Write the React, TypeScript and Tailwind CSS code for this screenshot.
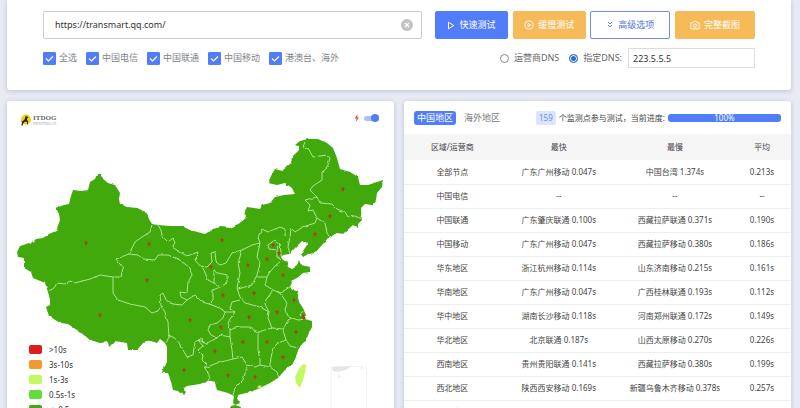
import { useState } from "react";

const carriers = ["全选", "中国电信", "中国联通", "中国移动", "港澳台、海外"];

const rows = [
  ["全部节点", "广东广州移动 0.047s", "中国台湾 1.374s", "0.213s"],
  ["中国电信", "--", "--", "--"],
  ["中国联通", "广东肇庆联通 0.100s", "西藏拉萨联通 0.371s", "0.190s"],
  ["中国移动", "广东广州移动 0.047s", "西藏拉萨移动 0.380s", "0.186s"],
  ["华东地区", "浙江杭州移动 0.114s", "山东济南移动 0.215s", "0.161s"],
  ["华南地区", "广东广州移动 0.047s", "广西桂林联通 0.193s", "0.112s"],
  ["华中地区", "湖南长沙移动 0.118s", "河南郑州联通 0.172s", "0.149s"],
  ["华北地区", "北京联通 0.187s", "山西太原移动 0.270s", "0.226s"],
  ["西南地区", "贵州贵阳联通 0.141s", "西藏拉萨移动 0.380s", "0.199s"],
  ["西北地区", "陕西西安移动 0.169s", "新疆乌鲁木齐移动 0.378s", "0.257s"],
  ["东北地区", "黑龙江哈尔滨联通 0.088s", "吉林长春联通 0.290s", "0.204s"],
];

const legend = [
  { color: "bg-[#dc1f1a]", text: ">10s" },
  { color: "bg-[#f09a30]", text: "3s-10s" },
  { color: "bg-[#c2f95f]", text: "1s-3s" },
  { color: "bg-[#62dd3a]", text: "0.5s-1s" },
  { color: "bg-[#42a90d]", text: "<=0.5s" },
];

const outline =
  "17,252 20,246 29,243 31,244 36,239 43,238 49,234 56,231 60,220 59,214 56,208 64,205 69,204 71,196 73,190 81,191 88,190 90,182 95,179 97,174 101,174 102,178 108,183 115,185 120,193 119,199 120,204 128,207 137,208 146,212 149,219 152,224 158,225 170,226 182,226 190,230 205,234 213,229 221,227 230,228 240,223 247,217 244,213 247,207 254,208 260,209 262,205 270,203 275,197 284,195 295,194 292,188 285,183 277,185 268,183 271,176 275,169 282,171 291,163 292,157 299,150 299,146 295,145 300,141 308,139 318,139 327,143 333,148 337,158 340,169 350,172 358,177 360,185 368,185 377,182 383,180 382,187 377,193 376,200 372,205 365,204 361,208 362,220 358,224 358,228 353,225 343,234 337,233 328,238 322,245 315,253 308,254 303,257 301,254 307,245 306,241 302,241 295,248 290,254 283,255 281,257 283,260 287,262 288,267 292,269 297,266 299,260 301,265 310,267 310,272 303,273 297,278 293,280 290,287 297,292 299,302 303,308 306,315 305,319 312,321 312,327 308,335 306,341 303,343 298,350 297,355 292,365 285,370 278,378 270,383 260,388 250,392 238,395 237,398 240,403 235,405 233,403 234,396 228,393 217,390 215,383 208,381 200,384 187,386 184,388 185,395 180,393 178,391 173,390 171,382 168,373 162,373 163,369 167,363 167,347 165,343 160,339 157,343 151,341 143,343 137,350 128,350 127,343 115,341 109,347 108,342 100,343 90,340 80,332 68,324 60,323 49,316 46,307 50,305 50,300 48,292 45,283 33,278 31,272 24,268 24,258 18,257";

const borders = [
  "49,291 54,288 57,283 65,284 70,281 75,283 90,279 100,275 113,277 121,277 123,268 116,259 129,254 135,242 142,237 150,232 152,225",
  "113,277 113,293 118,300 130,304 145,307 152,313 158,311 161,306 165,312 168,323 169,337 166,343",
  "161,306 160,295 163,293 167,302 173,304 182,305 187,300 181,297 180,292 187,293 188,282 192,275 190,268 180,260 168,255 158,255 155,260 143,259 138,255 129,254",
  "158,225 161,230 162,236 168,242 173,238 175,243 172,247 180,252 187,256 198,252 195,260 200,266 207,267 212,262 211,253 215,252 216,262 220,265 226,263 232,253 242,250 252,245 260,243",
  "200,266 203,268 208,280 214,283 214,270 218,273 227,275 227,283 220,287 214,283",
  "220,287 213,290 213,300 209,304 202,302 195,295 187,300",
  "209,304 218,307 225,312 235,312 230,309 232,302 240,300",
  "242,250 238,263 240,273 237,288 240,297 245,303 260,307 269,312 268,318 272,328 283,329",
  "260,243 257,257 260,263 257,275 252,285 238,289",
  "260,243 258,237 262,229 268,232 280,227 285,229 285,236 290,237 291,228 295,232 303,227 315,223 317,218 325,223 327,233 330,238",
  "290,237 288,247 290,254",
  "317,218 313,210 308,211 310,205 305,200 317,197 320,203 332,204 337,209 345,212 348,217 355,216 362,219",
  "317,197 310,190 313,186 322,180 322,172 327,168 330,158 327,155 313,157 308,148 303,147 305,142",
  "268,245 275,240 280,244 277,250 269,249 268,245",
  "280,244 281,252 281,256",
  "277,250 277,257 281,260",
  "281,261 275,266 270,272 267,277 257,277",
  "267,277 265,285 273,290 280,293 290,287",
  "278,291 283,297 287,303 285,310 287,315 292,318 298,320 305,319",
  "305,319 300,315 303,311",
  "273,290 266,300 265,304 269,312",
  "292,318 288,320 283,330 286,340 290,346 298,348",
  "286,340 278,343 273,348 270,363 270,367 277,372 279,378",
  "230,330 238,327 248,327 258,332 265,330 272,328",
  "258,332 258,350 260,360 260,365 270,367",
  "260,365 255,367 247,365 242,357 233,359 217,363 205,368 210,377 208,381",
  "247,367 243,380 235,388 233,395",
  "225,312 223,318 217,323 210,325 208,330 211,335 217,338 220,335 230,337 232,350 233,359",
  "235,312 228,322 230,330 230,337",
  "217,338 207,343 198,340 203,346 198,350 203,355 202,360 207,365 205,368",
  "168,335 173,337 177,340 180,345 187,357 193,355 195,342 202,338 203,343 207,343",
];

const markers = [
  [86, 243], [149, 244], [147, 280], [100, 315], [190, 320], [184, 370], [222, 240], [211, 267],
  [248, 265], [223, 295], [267, 259], [273, 245], [279, 253], [283, 275], [315, 234], [330, 216],
  [343, 189], [254, 293], [294, 300], [277, 312], [303, 316], [304, 318], [249, 317], [221, 327],
  [296, 332], [243, 342], [267, 342], [283, 357], [215, 351], [228, 375], [255, 377],
];

function ChinaMap() {
  return (
    <svg viewBox="7 131 387 297" className="block w-full" role="img" aria-label="中国地图">
      <defs>
        <filter id="coast" x="0" y="0" width="1" height="1" primitiveUnits="objectBoundingBox">
          <feTurbulence type="fractalNoise" baseFrequency="0.2" numOctaves="1" seed="4" />
          <feDisplacementMap in="SourceGraphic" scale="0.007" xChannelSelector="R" yChannelSelector="G" />
        </filter>
      </defs>
      <g filter="url(#coast)">
        <rect x="7" y="131" width="387" height="297" fill="transparent" />
        <polygon points={outline} fill="#42a90d" />
        <polygon points="229,410 231,406 235,405 241,407 239,413 234,417 229,415" fill="#42a90d" />
        <g fill="none" stroke="#b5eaa0" strokeWidth="0.9" strokeLinejoin="round">
          {borders.map((points) => (
            <polyline key={points} points={points} />
          ))}
        </g>
      </g>
      <polygon points="301,366 304,364 306,365 305,373 303,380 300,388 296,383 295,377 298,371" fill="#c2f95f" />
      <path d="M257 387l3-2 2 2-2 2z" fill="#c2f95f" />
      <path d="M331.500 428V366.500H366.500V428" fill="none" stroke="#f5f5f5" />
      <path d="M332 367l20-1-6 4-8 2-5-1zM338 375l3 1-2 2zM361 366l2 2-2 1z" fill="#e6e6e6" />
      {markers.map(([x, y]) => (
        <path
          key={`${x}-${y}`}
          transform={`translate(${x} ${y})`}
          d="M0-2.300L1-.7 2.300 0 .8.700.5 2.500H-.5L-.8.700-2.300 0-1-.7z"
          fill="#a8430f"
        />
      ))}
    </svg>
  );
}

function Logo() {
  return (
    <div className="flex items-center gap-px">
      <svg viewBox="0 0 12 12" className="size-3" aria-hidden="true">
        <circle cx="6" cy="5.500" r="5" fill="#f2cf12" />
        <path d="M6 1.500l.6 1 1.600.4-.4 1-.8.300.2 2.300.8.500v3.500h-.9V8L5 7.600 3.300 9.200 2.600 11.400H1.400L2 8.600 1 7l1.200.6L4.600 5.400z" fill="#2b2108" />
      </svg>
      <div className="flex flex-col font-['Liberation_Serif',serif] text-[#666]">
        <span className="text-[7px] leading-[8px] font-bold">ITDOG</span>
        <span className="text-[3px] leading-[4px] text-[#999]">WWW.ITDOG.CN</span>
      </div>
    </div>
  );
}

function PlayIcon() {
  return (
    <svg viewBox="0 0 8 9" className="h-[9px] w-2" fill="none" stroke="currentColor" aria-hidden="true">
      <path d="M1.500 1.200v6.600L6.800 4.500z" strokeLinejoin="round" />
    </svg>
  );
}

function CirclePlayIcon() {
  return (
    <svg viewBox="0 0 10 10" className="size-[10px]" fill="none" stroke="currentColor" strokeWidth="0.9" aria-hidden="true">
      <circle cx="5" cy="5" r="4.100" />
      <path d="M4 3.200v3.600L6.800 5z" strokeLinejoin="round" />
    </svg>
  );
}

function ChevronsIcon() {
  return (
    <svg viewBox="0 0 8 8" className="size-2" fill="none" stroke="currentColor" strokeWidth="0.9" aria-hidden="true">
      <path d="M2 1l2 2 2-2M2 4l2 2 2-2" />
    </svg>
  );
}

function CameraIcon() {
  return (
    <svg viewBox="0 0 10 10" className="size-[10px]" fill="none" stroke="currentColor" strokeWidth="0.9" aria-hidden="true">
      <path d="M.8 2.800h2l.9-1.500h2.600l.9 1.500h2v6H.8z" strokeLinejoin="round" />
      <circle cx="5" cy="5.600" r="1.600" />
    </svg>
  );
}

export default function App() {
  const [url, setUrl] = useState("https://transmart.qq.com/");
  const [dns, setDns] = useState("custom");
  const button = "flex h-7 items-center justify-center gap-1 rounded-[2px] border text-[9px]";
  const radio =
    "size-[9px] appearance-none rounded-full border border-[#888] bg-white checked:border-[#2a6fd0] checked:bg-[#2a6fd0] checked:shadow-[inset_0_0_0_1px_white]";

  return (
    <div className="h-screen overflow-hidden bg-[#e8ebf3] pr-[9px] pl-[7px] font-['Noto_Sans','Noto_Sans_CJK_SC',sans-serif] text-[#555]">
      <section className="rounded-b-[3px] bg-white pt-[11px] pr-9 pb-[22px] pl-9 shadow-[0_1px_5px_rgba(60,70,100,0.25)]">
        <div className="flex gap-[13px]">
          <div className="flex h-7 flex-1 items-center rounded-[2px] border border-[#c9ccd1] pr-2 pl-[11px]">
            <input
              aria-label="网址"
              value={url}
              onChange={(e) => setUrl(e.target.value)}
              className="min-w-0 flex-1 text-[9px] text-[#333] outline-none"
            />
            <button type="button" aria-label="清空" onClick={() => setUrl("")}>
              <svg viewBox="0 0 12 12" className="size-3">
                <circle cx="6" cy="6" r="6" fill="#c3c3c3" />
                <path d="M4 4l4 4M8 4l-4 4" stroke="#fff" strokeWidth="1.300" />
              </svg>
            </button>
          </div>
          <div className="grid w-80 grid-cols-[73px_73px_80px_80px] justify-between">
            <button type="button" className={`${button} border-[#517dfb] bg-[#517dfb] text-white`}>
              <PlayIcon />
              快速测试
            </button>
            <button type="button" className={`${button} border-[#f6bb58] bg-[#f6bb58] text-white`}>
              <CirclePlayIcon />
              缓慢测试
            </button>
            <button type="button" className={`${button} border-[#6f8fe6] bg-white text-[#5373d8]`}>
              <ChevronsIcon />
              高级选项
            </button>
            <button type="button" className={`${button} border-[#f6bb58] bg-[#f6bb58] text-white`}>
              <CameraIcon />
              完整截图
            </button>
          </div>
        </div>

        <div className="mt-[9px] flex items-center justify-between">
          <div className="flex gap-[9px]">
            {carriers.map((name) => (
              <label key={name} className="flex items-center gap-[3px] text-[9px] text-[#808489]">
                <span className="grid size-[13px]">
                  <input type="checkbox" defaultChecked className="peer col-start-1 row-start-1 size-[13px] appearance-none rounded-[1px] border border-[#517dfb] checked:bg-[#517dfb]" />
                  <svg viewBox="0 0 13 13" className="pointer-events-none col-start-1 row-start-1 size-[13px]" fill="none" stroke="#fff" aria-hidden="true">
                    <path d="M3 6.500l2.500 2.500L10 4.500" strokeWidth="1.200" />
                  </svg>
                </span>
                {name}
              </label>
            ))}
          </div>
          <div className="flex items-center text-[9px] text-[#666]">
            <label className="flex items-center gap-[5px]">
              <input type="radio" name="dns" checked={dns === "isp"} onChange={() => setDns("isp")} className={radio} />
              运营商DNS
            </label>
            <label className="ml-[10px] flex items-center gap-[5px]">
              <input type="radio" name="dns" checked={dns === "custom"} onChange={() => setDns("custom")} className={radio} />
              指定DNS:
            </label>
            <input aria-label="DNS地址" defaultValue="223.5.5.5" className="ml-[6px] h-5 w-[127px] border border-[#d9dce2] px-1 text-[9px] text-[#333] outline-none" />
          </div>
        </div>
      </section>

      <div className="mt-[11px] grid grid-cols-2 items-start gap-[10px]">
        <section className="relative rounded-[3px] bg-white shadow-[0_1px_5px_rgba(60,70,100,0.25)]">
          <div className="flex h-[30px] items-center justify-between pt-2 pr-[15px] pl-[13px]">
            <Logo />
            <label className="flex items-center gap-1 pb-1">
              <svg viewBox="0 0 6 8" className="h-2 w-[6px]" aria-hidden="true">
                <path d="M3.300.5L.8 4.300h1.700L2 7.700l3-4.200H3.400z" fill="#ee4444" />
              </svg>
              <span className="flex h-[5px] w-[15px] items-center justify-end rounded-full bg-[#aebff5]">
                <input type="checkbox" defaultChecked aria-label="闪电模式" className="size-2 appearance-none rounded-full bg-[#517dfb]" />
              </span>
            </label>
          </div>
          <ChinaMap />
          <ul className="absolute top-[241px] left-[22px] text-[8px] text-[#333]">
            {legend.map((item) => (
              <li key={item.text} className="flex h-[15px] items-center gap-[7px]">
                <span className={`h-[9px] w-[13px] rounded-[2px] ${item.color}`} />
                {item.text}
              </li>
            ))}
          </ul>
        </section>

        <section className="rounded-[3px] bg-white shadow-[0_1px_5px_rgba(60,70,100,0.25)]">
          <div className="flex h-[33px] items-center pr-[10px] pl-[10px]">
            <button type="button" className="h-[14px] rounded-[3px] bg-[#517dfb] px-[3px] text-[9px] leading-[14px] text-white">
              中国地区
            </button>
            <button type="button" className="ml-2 text-[9px] leading-[14px] text-[#777]">
              海外地区
            </button>
            <span className="ml-9 h-[14px] rounded-[2px] bg-[#dbe5fe] px-[3px] text-[8px] leading-[14px] text-[#6d8ce8]">159</span>
            <span className="mr-[3px] ml-[3px] text-[8px] whitespace-nowrap text-[#444]">个监测点参与测试，当前进度:</span>
            <div role="progressbar" aria-valuenow={100} className="h-2 flex-1 rounded-[3px] bg-[#517dfb] text-center text-[8px] leading-2 text-white">
              100%
            </div>
          </div>
          <table className="w-full table-fixed text-center text-[8px] whitespace-nowrap text-[#444]">
            <thead>
              <tr className="h-[26px] bg-[#f5f5f6]">
                <th className="w-[25%] font-normal">区域/运营商</th>
                <th className="w-[30%] font-normal">最快</th>
                <th className="w-[30%] font-normal">最慢</th>
                <th className="w-[15%] font-normal">平均</th>
              </tr>
            </thead>
            <tbody>
              {rows.map((row) => (
                <tr key={row[0]} className="h-6 border-b border-[#eceef0]">
                  {row.map((cell, i) => (
                    <td key={i}>{cell}</td>
                  ))}
                </tr>
              ))}
            </tbody>
          </table>
        </section>
      </div>
    </div>
  );
}
